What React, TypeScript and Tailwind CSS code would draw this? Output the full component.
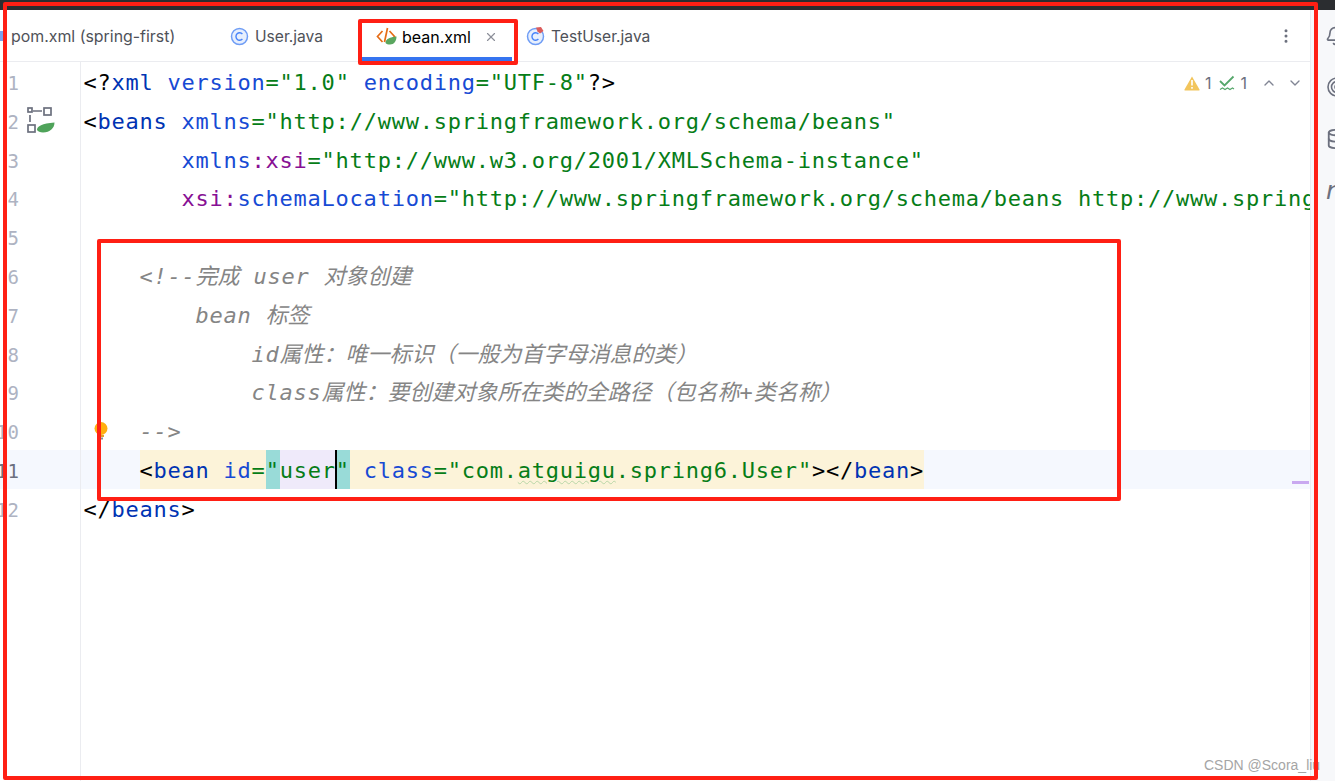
import { Bell, ChevronDown, ChevronUp, Database, MoreVertical, X } from "lucide-react";
import type { ReactNode } from "react";

const mono = "font-['DejaVu_Sans_Mono',monospace] text-[22px] tracking-[0.76px]";

const Tag = ({ children }: { children: ReactNode }) => <span className="text-[#0033b3]">{children}</span>;
const Attr = ({ children }: { children: ReactNode }) => <span className="text-[#174ad4]">{children}</span>;
const Ns = ({ children }: { children: ReactNode }) => <span className="text-[#871094]">{children}</span>;
const Val = ({ children }: { children: ReactNode }) => <span className="text-[#067d17]">{children}</span>;
const Cn = ({ children }: { children: ReactNode }) => (
  <span className="font-['Noto_Sans_CJK_SC',sans-serif] tracking-normal leading-none">{children}</span>
);

function Comment({ children }: { children: ReactNode }) {
  return <span className="italic text-[#858585]">{children}</span>;
}

function ClassIcon({ badge }: { badge?: boolean }) {
  return (
    <svg width="19" height="19" viewBox="0 0 19 19" fill="none" className="shrink-0">
      <circle cx="9.5" cy="9.5" r="8" fill="#e7effd" stroke="#6f9df5" strokeWidth="1.5" />
      <path d="M12.4 7a3.7 3.7 0 1 0 0 5" stroke="#4682fa" strokeWidth="1.4" />
      {badge && <path d="M10 0.5 L15 0 L17.5 4 L14 6.5 L11.5 4.5 Z" fill="#db5c5c" />}
    </svg>
  );
}

function XmlIcon() {
  return (
    <svg width="21" height="20" viewBox="0 0 21 20" fill="none" className="shrink-0">
      <path d="M6.5 4L1.5 9.5L6.5 15" stroke="#e66d17" strokeWidth="1.7" />
      <path d="M11.5 1L8.5 15" stroke="#e66d17" strokeWidth="1.7" />
      <path d="M13.5 4L18.5 9.5L13.5 15" stroke="#e66d17" strokeWidth="1.7" />
      <path d="M9.5 16C9.5 12 14 10 20.5 9.5C20.5 14 18 17.5 14 17.5C12 17.5 10.5 17 9.5 16Z" fill="#5aa65f" />
    </svg>
  );
}

function SpringDiagramIcon() {
  return (
    <svg width="28" height="26" viewBox="0 0 28 26" fill="none">
      <rect x="1" y="1" width="4" height="4" stroke="#6c707e" strokeWidth="1.7" />
      <rect x="17" y="1" width="7" height="7" stroke="#6c707e" strokeWidth="1.7" />
      <rect x="1" y="18" width="7" height="7" stroke="#6c707e" strokeWidth="1.7" />
      <path d="M6 4H15M3 8V15" stroke="#6c707e" strokeWidth="1.7" />
      <path d="M10 23C10 19 15 16.500 27.500 15.500C27.500 21 23 25.500 16 25.500C13 25.500 11 24.500 10 23Z" fill="#4fa35a" />
    </svg>
  );
}

function Row({ n, children, current }: { n: number; children?: ReactNode; current?: boolean }) {
  return (
    <div className={`flex h-[38.8px] relative ${current ? "bg-[#f5f8fe]" : ""}`}>
      <div className="w-[81px] shrink-0 border-r border-[#ebecf0] flex">
        <span
          className={`w-[19px] font-['DejaVu_Sans_Mono',monospace] text-[19px] pt-[4px] leading-[34.8px] whitespace-nowrap flex justify-end ${
            current ? "text-[#6c707e]" : "text-[#aeb3c2]"
          }`}
        >
          {n}
        </span>
        {n === 2 && (
          <span className="ml-[8px] mt-[6px]">
            <SpringDiagramIcon />
          </span>
        )}
        {n === 10 && (
          <svg width="14" height="20" viewBox="0 0 14 20" className="ml-[75px] mt-[11px] shrink-0">
            <circle cx="7" cy="6.500" r="6.500" fill="#ffaf0f" />
            <rect x="4" y="13" width="6" height="2" fill="#e0a030" />
            <rect x="5" y="15.500" width="4" height="2" fill="#8c8c8c" />
          </svg>
        )}
      </div>
      <div className={`pl-[2.5px] pt-[4px] whitespace-pre leading-[34.8px] text-black ${mono}`}>{children}</div>
    </div>
  );
}

export default function App() {
  return (
    <div className="relative w-[1335px] h-[781px] overflow-hidden bg-white flex flex-col font-['Inter',sans-serif]">
      <div className="h-[10px] shrink-0 bg-[#2b2d30]" />

      <div className="flex flex-1 min-h-0">
        <main className="w-[1310px] shrink-0 flex flex-col overflow-hidden">
          {/* Tabs */}
          <div className="h-[52px] shrink-0 flex items-stretch border-b border-[#ebecf0] text-[15.6px] text-[#4f5259] relative">
            <div className="w-[230px] pl-[11px] pt-[2px] flex items-center whitespace-nowrap relative text-[15.9px]">
              <span className="absolute left-0 top-[21px] w-[3px] h-[10px] bg-[#7ba2ee]" />
              pom.xml (spring-first)
            </div>
            <div className="w-[130px] pt-[2px] flex items-center gap-[6px]">
              <ClassIcon />
              User.java
            </div>
            <div className="w-[152px] pl-[16px] pr-[14px] flex items-center border-b-[4px] border-[#3574f0] text-black text-[16px] pt-[6px]">
              <XmlIcon />
              <span className="ml-[5px]">bean.xml</span>
              <X size={14} className="ml-[13px] text-[#8c8f99]" />
            </div>
            <div className="ml-[14px] pt-[2px] flex items-center gap-[6px]">
              <ClassIcon badge />
              TestUser.java
            </div>
            <MoreVertical size={18} className="absolute left-[1277px] top-[17px] text-[#6c707e]" />
          </div>

          {/* Editor */}
          <div className="relative flex-1 flex flex-col">
            <Row n={1}>
              {"<?"}
              <Tag>xml</Tag> <Attr>version</Attr>
              <Val>=</Val>
              <Val>"1.0"</Val> <Attr>encoding</Attr>
              <Val>=</Val>
              <Val>"UTF-8"</Val>
              {"?>"}
            </Row>
            <Row n={2}>
              {"<"}
              <Tag>beans</Tag> <Attr>xmlns</Attr>
              <Val>="http://www.springframework.org/schema/beans"</Val>
            </Row>
            <Row n={3}>
              {"       "}
              <Attr>xmlns</Attr>
              <Ns>:xsi</Ns>
              <Val>="http://www.w3.org/2001/XMLSchema-instance"</Val>
            </Row>
            <Row n={4}>
              {"       "}
              <Ns>xsi:</Ns>
              <Attr>schemaLocation</Attr>
              <Val>="http://www.springframework.org/schema/beans http://www.springframework.org/schema/beans/spring-beans.xsd"</Val>
            </Row>
            <Row n={5} />
            <Row n={6}>
              <Comment>
                {"    <!--"}
                <Cn>完成</Cn>
                {" user "}
                <Cn>对象创建</Cn>
              </Comment>
            </Row>
            <Row n={7}>
              <Comment>
                {"        bean "}
                <Cn>标签</Cn>
              </Comment>
            </Row>
            <Row n={8}>
              <Comment>
                {"            id"}
                <Cn>属性：唯一标识（一般为首字母消息的类）</Cn>
              </Comment>
            </Row>
            <Row n={9}>
              <Comment>
                {"            class"}
                <Cn>属性：要创建对象所在类的全路径（包名称</Cn>
                +<Cn>类名称）</Cn>
              </Comment>
            </Row>
            <Row n={10}>
              <Comment>{"    -->"}</Comment>
            </Row>
            <Row n={11} current>
              {"    "}
              <span className="inline-block -mt-[4px] pt-[4px] bg-[#fcf3d9]">
                {"<"}
                <Tag>bean</Tag> <Attr>id</Attr>
                <Val>=</Val>
                <span className="inline-block -mt-[4px] pt-[4px] bg-[#99dbd8] text-[#067d17]">"</span>
                <span className="inline-block -mt-[4px] pt-[4px] bg-[#efeafa] text-[#067d17]">user</span>
                <span className="relative inline-block -mt-[4px] pt-[4px] bg-[#99dbd8] text-[#067d17]">
                  "
                  <span className="absolute left-[-1px] top-0 w-[2px] h-full bg-black" />
                </span>{" "}
                <Attr>class</Attr>
                <Val>="com.</Val>
                <span className="text-[#067d17] underline decoration-wavy decoration-[#b9d7a8] decoration-1 underline-offset-2">atguigu</span>
                <Val>.spring6.User"</Val>
                {"></"}
                <Tag>bean</Tag>
                {">"}
              </span>
              <span className="absolute left-[1292px] top-[31px] w-[17px] h-[3px] bg-[#c9a9f0]" />
            </Row>
            <Row n={12}>
              {"</"}
              <Tag>beans</Tag>
              {">"}
            </Row>
            <div className="flex-1 ml-[80px] border-l border-[#ebecf0]" />

            {/* Inspection widget */}
            <div className="absolute left-[1184px] top-[9px] flex items-center text-[16px] text-[#6c707e]">
              <svg width="16" height="15" viewBox="0 0 16 15">
                <path d="M8 0.5L15.5 13.5C15.7 14 15.4 14.5 15 14.5H1C0.6 14.5 0.3 14 0.5 13.5Z" fill="#f2c55c" />
                <rect x="7.2" y="4" width="1.6" height="5.5" fill="#fff" />
                <rect x="7.2" y="11" width="1.6" height="1.7" fill="#fff" />
              </svg>
              <span className="ml-[5px]">1</span>
              <svg width="16" height="17" viewBox="0 0 16 17" fill="none" className="ml-[7px]">
                <path d="M1 6L5.5 10.5L14.5 1.5" stroke="#55a76a" strokeWidth="1.8" />
                <path d="M1 14.5L3.5 13L6 14.5L8.5 13L11 14.5L13.5 13L15 14" stroke="#55a76a" strokeWidth="1.1" />
              </svg>
              <span className="ml-[6px]">1</span>
              <ChevronUp size={16} className="ml-[14px] text-[#818594]" />
              <ChevronDown size={16} className="ml-[10px] text-[#818594]" />
            </div>
          </div>
        </main>

        {/* Right tool strip */}
        <aside className="flex-1 bg-[#f7f8fa] border-l border-[#ebecf0] overflow-hidden pl-[15px] pt-[16px] flex flex-col gap-[31px] text-[#6c707e]">
          <Bell size={20} className="shrink-0 -ml-[1px]" />
          <svg width="20" height="20" viewBox="0 0 20 20" fill="none" stroke="currentColor" strokeWidth="1.6" className="shrink-0">
            <circle cx="11" cy="10" r="9" />
            <circle cx="11" cy="10" r="5.5" />
            <circle cx="11" cy="10" r="2" />
          </svg>
          <Database size={22} className="shrink-0" />
          <span className="font-['DejaVu_Sans',sans-serif] italic text-[25px] leading-[20px] shrink-0">n</span>
        </aside>
      </div>

      <span className="absolute left-[1204px] top-[757px] text-[14px] leading-[16px] text-[#a5a5a5] font-['Liberation_Sans',sans-serif] whitespace-nowrap">
        CSDN @Scora_liu
      </span>

      {/* Red annotation frames */}
      <div className="absolute left-[3px] top-[2px] w-[1315px] h-[778px] border-4 border-[#ff1f14] rounded-[2px] pointer-events-none" />
      <div className="absolute left-[358px] top-[19px] w-[160px] h-[46px] border-4 border-[#ff1f14] rounded-[2px] pointer-events-none" />
      <div className="absolute left-[97px] top-[239px] w-[1024px] h-[262px] border-4 border-[#ff1f14] rounded-[2px] pointer-events-none" />
    </div>
  );
}
